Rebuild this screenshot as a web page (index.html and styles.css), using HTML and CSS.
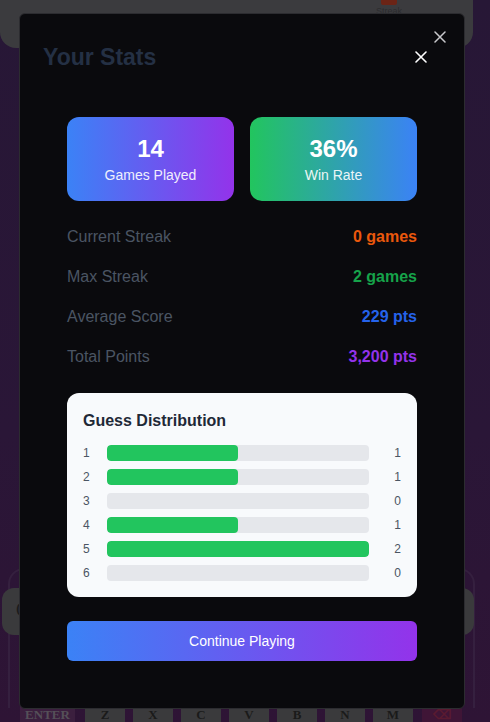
FILE: index.html
```html
<!DOCTYPE html>
<html lang="en">
<head>
<meta charset="utf-8">
<title>Your Stats</title>
<link rel="stylesheet" href="styles.css">
</head>
<body>
<div class="page">
  <div class="top-card">
    <div class="top-stat"><span class="ts-val ts-blue">7</span></div>
    <div class="top-stat"><span class="ts-val ts-green">●</span></div>
    <div class="top-stat"><span class="ts-val ts-purple">3200</span></div>
    <div class="top-stat"><span class="ts-icon"></span><span class="ts-label">Streak</span></div>
  </div>
  <div class="spacer"></div>
  <div class="bottom-panel">
    <div class="guess-input">Q</div>
  </div>
  <div class="keyboard">
    <span class="key key-wide">ENTER</span>
    <span class="key">Z</span>
    <span class="key">X</span>
    <span class="key">C</span>
    <span class="key">V</span>
    <span class="key">B</span>
    <span class="key">N</span>
    <span class="key">M</span>
    <span class="key key-back">⌫</span>
  </div>
</div>

<div class="overlay">
  <div class="modal">
    <button class="close-outer" aria-label="Close">
      <svg width="12" height="12" viewBox="0 0 12 12"><path d="M1 1L11 11M11 1L1 11" stroke="currentColor" stroke-width="1.5" stroke-linecap="round"/></svg>
    </button>
    <div class="modal-header">
      <h2 class="modal-title">Your Stats</h2>
      <button class="close-inner" aria-label="Close">
        <svg width="12" height="12" viewBox="0 0 12 12"><path d="M1 1L11 11M11 1L1 11" stroke="currentColor" stroke-width="1.6" stroke-linecap="round"/></svg>
      </button>
    </div>
    <div class="modal-body">
      <div class="cards">
        <div class="card card-blue">
          <div class="card-num">14</div>
          <div class="card-label">Games Played</div>
        </div>
        <div class="card card-green">
          <div class="card-num">36%</div>
          <div class="card-label">Win Rate</div>
        </div>
      </div>
      <div class="rows">
        <div class="row"><span class="row-label">Current Streak</span><span class="row-val v-orange">0 games</span></div>
        <div class="row"><span class="row-label">Max Streak</span><span class="row-val v-green">2 games</span></div>
        <div class="row"><span class="row-label">Average Score</span><span class="row-val v-blue">229 pts</span></div>
        <div class="row"><span class="row-label">Total Points</span><span class="row-val v-purple">3,200 pts</span></div>
      </div>
      <div class="dist">
        <h3 class="dist-title">Guess Distribution</h3>
        <div class="dist-rows">
          <div class="dist-row"><span class="d-label">1</span><div class="bar"><div class="fill" style="width:50%"></div></div><span class="d-count">1</span></div>
          <div class="dist-row"><span class="d-label">2</span><div class="bar"><div class="fill" style="width:50%"></div></div><span class="d-count">1</span></div>
          <div class="dist-row"><span class="d-label">3</span><div class="bar"><div class="fill" style="width:0%"></div></div><span class="d-count">0</span></div>
          <div class="dist-row"><span class="d-label">4</span><div class="bar"><div class="fill" style="width:50%"></div></div><span class="d-count">1</span></div>
          <div class="dist-row"><span class="d-label">5</span><div class="bar"><div class="fill" style="width:100%"></div></div><span class="d-count">2</span></div>
          <div class="dist-row"><span class="d-label">6</span><div class="bar"><div class="fill" style="width:0%"></div></div><span class="d-count">0</span></div>
        </div>
      </div>
      <button class="continue">Continue Playing</button>
    </div>
  </div>
</div>
</body>
</html>
```

FILE: styles.css
```css
* { box-sizing: border-box; }
html, body { margin: 0; padding: 0; }
body {
  font-family: "Liberation Sans", Arial, sans-serif;
  width: 490px;
  height: 722px;
  overflow: hidden;
  background: #2a1736;
}

.page {
  height: 722px;
  display: flex;
  flex-direction: column;
  background: linear-gradient(180deg, #271736 0%, #2a1637 60%, #2e1435 100%);
}

.top-card {
  height: 48px;
  width: 473px;
  background: #3b3b3e;
  border-radius: 0 0 16px 16px;
  display: flex;
  align-items: flex-start;
  padding-left: 60px;
  overflow: hidden;
}
.top-stat {
  display: flex;
  flex-direction: column;
  align-items: center;
  margin-top: -20px;
}
.top-stat:nth-child(1) { width: 24px; }
.top-stat:nth-child(2) { width: 24px; margin-left: 84px; }
.top-stat:nth-child(3) { width: 60px; margin-left: 52px; }
.top-stat:nth-child(4) { width: 30px; margin-left: 70px; margin-top: -14px; }
.ts-val { font-weight: 700; font-size: 24px; line-height: 24px; }
.ts-blue { color: #1f3f73; }
.ts-green { color: #155a32; font-size: 14px; line-height: 24px; }
.ts-purple { color: #4a1a5a; }
.ts-icon { display: block; width: 16px; height: 19px; background: #6b2416; border-radius: 2px; }
.ts-label { font-size: 9px; color: #2c2c2e; line-height: 12px; }

.spacer { flex: 1; }

.bottom-panel {
  margin: 0 15px 0 8px;
  height: 140px;
  border: 2px solid #35203f;
  border-bottom: none;
  border-radius: 16px 16px 0 0;
  padding-top: 18px;
  margin-bottom: 0;
}
.guess-input {
  margin: 0 0 0 -8px;
  width: 472px;
  height: 47px;
  background: #3a3a3c;
  border-radius: 12px;
  color: #1c1c1c;
  font-family: "Liberation Serif", serif;
  font-size: 18px;
  padding: 12px 0 0 14px;
}

.keyboard {
  height: 22px;
  display: flex;
  gap: 8px;
  padding-left: 20px;
  align-items: flex-end;
  margin-top: -8px;
}
.key {
  width: 40px;
  height: 22px;
  background: #3a3a3c;
  color: #1a1a1a;
  font-family: "Liberation Serif", serif;
  font-weight: 700;
  font-size: 13px;
  display: flex;
  justify-content: center;
  align-items: flex-end;
  line-height: 14px;
}
.key-wide { width: 55px; background: #3b1f3e; color: #555058; margin-right: 2px; }
.key-back { background: #3f1536; color: #5a1a30; margin-left: 1px; }

.overlay {
  position: fixed;
  inset: 0;
  padding: 13px 0 0 19px;
}

.modal {
  position: relative;
  width: 446px;
  height: 696px;
  background: #0a0a0d;
  border: 1px solid #2c2c30;
  border-radius: 6px;
}
.close-outer, .close-inner {
  background: none;
  border: none;
  padding: 0;
  display: flex;
  align-items: center;
  justify-content: center;
  cursor: pointer;
}
.close-outer {
  position: absolute;
  top: 17px;
  right: 18px;
  width: 12px;
  height: 12px;
  color: #c9c9cc;
}
.close-inner {
  width: 12px;
  height: 12px;
  color: #ffffff;
}

.modal-header {
  display: flex;
  justify-content: space-between;
  align-items: center;
  padding: 27px 37px 0 23px;
}
.modal-title {
  margin: 0;
  font-size: 23px;
  line-height: 32px;
  font-weight: 700;
  color: #243044;
}

.modal-body {
  padding: 44px 47px 0 47px;
}

.cards {
  display: grid;
  grid-template-columns: 1fr 1fr;
  gap: 16px;
}
.card {
  height: 84px;
  border-radius: 12px;
  padding: 16px;
  text-align: center;
  color: #fff;
}
.card-blue { background: linear-gradient(90deg, #3b82f6, #9333ea); }
.card-green { background: linear-gradient(90deg, #22c55e, #3b82f6); }
.card-num { font-size: 24px; line-height: 32px; font-weight: 700; }
.card-label { font-size: 14px; line-height: 20px; opacity: 0.9; }

.rows {
  margin-top: 16px;
  display: flex;
  flex-direction: column;
}
.row {
  display: flex;
  justify-content: space-between;
  align-items: center;
  height: 40px;
  font-size: 16px;
}
.row-label { color: #4b5563; }
.row-val { font-weight: 700; }
.v-orange { color: #ea580c; }
.v-green { color: #16a34a; }
.v-blue { color: #2563eb; }
.v-purple { color: #9333ea; }

.dist {
  margin-top: 16px;
  background: #f8fafc;
  border-radius: 12px;
  padding: 16px;
}
.dist-title {
  margin: 0 0 12px;
  font-size: 16px;
  line-height: 24px;
  font-weight: 700;
  color: #1f2937;
}
.dist-rows {
  display: flex;
  flex-direction: column;
  gap: 8px;
}
.dist-row {
  display: flex;
  align-items: center;
  height: 16px;
  font-size: 12px;
  color: #4b5563;
}
.d-label { width: 16px; }
.bar {
  flex: 1;
  height: 16px;
  margin-left: 8px;
  background: #e5e7eb;
  border-radius: 4px;
  overflow: hidden;
}
.fill { height: 100%; background: #22c55e; border-radius: 4px; }
.d-count { width: 32px; text-align: right; }

.continue {
  display: block;
  width: 100%;
  height: 40px;
  margin-top: 24px;
  border: none;
  border-radius: 6px;
  background: linear-gradient(90deg, #3b82f6, #9333ea);
  color: #fff;
  font-family: "Liberation Sans", Arial, sans-serif;
  font-size: 14px;
}
```
